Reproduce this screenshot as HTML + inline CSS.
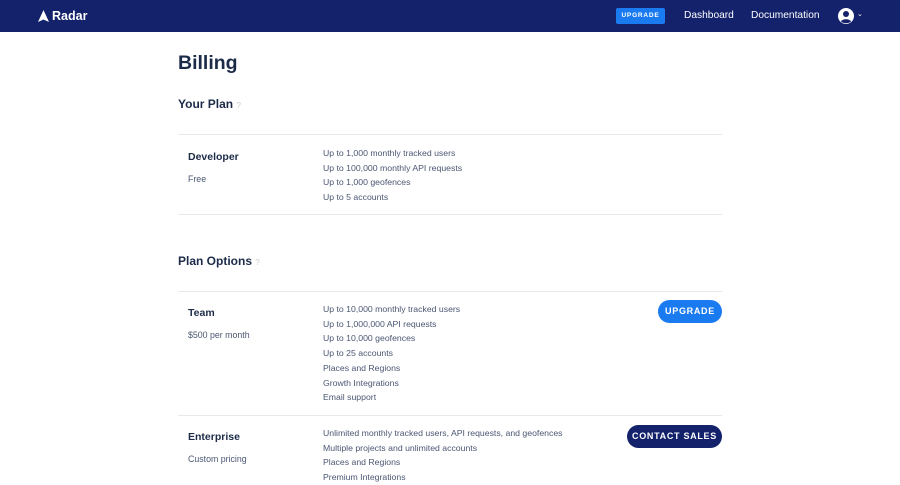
<!DOCTYPE html>
<html><head><style>
*{margin:0;padding:0;box-sizing:border-box}
body{width:900px;height:484px;overflow:hidden;background:#fff;font-family:"Liberation Sans",sans-serif;color:#1c2b48;position:relative}
.nav{position:absolute;left:0;top:0;width:900px;height:32px;background:#13226b}
.a{position:absolute;white-space:nowrap}
.hr{position:absolute;left:178px;width:544px;height:1px;background:#e8e9ec}
.f{font-size:8.7px;color:#4a5672}
.h{font-weight:bold;font-size:10.5px;color:#1c2b48}
.s{font-size:8.8px;color:#4a5672}
.btn{position:absolute;border-radius:12px;color:#fff;font-weight:bold;font-size:9px;letter-spacing:.7px;text-align:center;line-height:23px;height:23px}
</style></head><body>
<div class="nav">
<svg class="a" style="left:38px;top:10px" width="11" height="12" viewBox="0 0 11 12"><path d="M5.5 0L11 12L5.5 9.5L0 12Z" fill="#fff"/></svg>
<div class="a" style="left:52px;top:9px;color:#fff;font-weight:bold;font-size:12.5px">Radar</div>
<div class="a" style="left:616px;top:8px;width:49px;height:16px;background:#1a7bf0;border-radius:2px;color:#fff;font-size:6.5px;font-weight:bold;letter-spacing:.8px;text-align:center;line-height:16px">UPGRADE</div>
<div class="a" style="left:684px;top:10px;color:#fff;font-size:10.2px">Dashboard</div>
<div class="a" style="left:751px;top:10px;color:#fff;font-size:10.2px">Documentation</div>
<svg class="a" style="left:838px;top:8px" width="16" height="16" viewBox="0 0 16 16"><circle cx="8" cy="8" r="8" fill="#fff"/><circle cx="8" cy="6" r="3" fill="#13226b"/><path d="M3 13.5C4 10.5 12 10.5 13 13.5A8 8 0 0 1 3 13.5Z" fill="#13226b"/></svg>
<div class="a" style="left:857px;top:10px;color:#fff;font-size:7px">⌄</div>
</div>
<div class="a" style="left:178px;top:52px;font-size:19.5px;font-weight:bold">Billing</div>
<div class="a" style="left:178px;top:97px;font-size:12px;font-weight:bold">Your Plan <span style="color:#ccc;font-size:8px;font-weight:normal">?</span></div>
<div class="hr" style="top:134px"></div>
<div class="a h" style="left:188px;top:151px">Developer</div>
<div class="a s" style="left:188px;top:174px">Free</div>
<div class="a f" style="left:323px;top:146px;line-height:14.7px">Up to 1,000 monthly tracked users<br>Up to 100,000 monthly API requests<br>Up to 1,000 geofences<br>Up to 5 accounts</div>
<div class="hr" style="top:214px"></div>
<div class="a" style="left:178px;top:254px;font-size:12px;font-weight:bold">Plan Options <span style="color:#ccc;font-size:8px;font-weight:normal">?</span></div>
<div class="hr" style="top:291px"></div>
<div class="a h" style="left:188px;top:307px">Team</div>
<div class="a s" style="left:188px;top:330px">$500 per month</div>
<div class="a f" style="left:323px;top:302px;line-height:14.7px">Up to 10,000 monthly tracked users<br>Up to 1,000,000 API requests<br>Up to 10,000 geofences<br>Up to 25 accounts<br>Places and Regions<br>Growth Integrations<br>Email support</div>
<div class="btn" style="left:658px;top:300px;width:64px;background:#1a7bf0">UPGRADE</div>
<div class="hr" style="top:415px"></div>
<div class="a h" style="left:188px;top:431px">Enterprise</div>
<div class="a s" style="left:188px;top:454px">Custom pricing</div>
<div class="a f" style="left:323px;top:426px;line-height:14.7px">Unlimited monthly tracked users, API requests, and geofences<br>Multiple projects and unlimited accounts<br>Places and Regions<br>Premium Integrations</div>
<div class="btn" style="left:627px;top:425px;width:95px;background:#13226b">CONTACT SALES</div>
</body></html>
